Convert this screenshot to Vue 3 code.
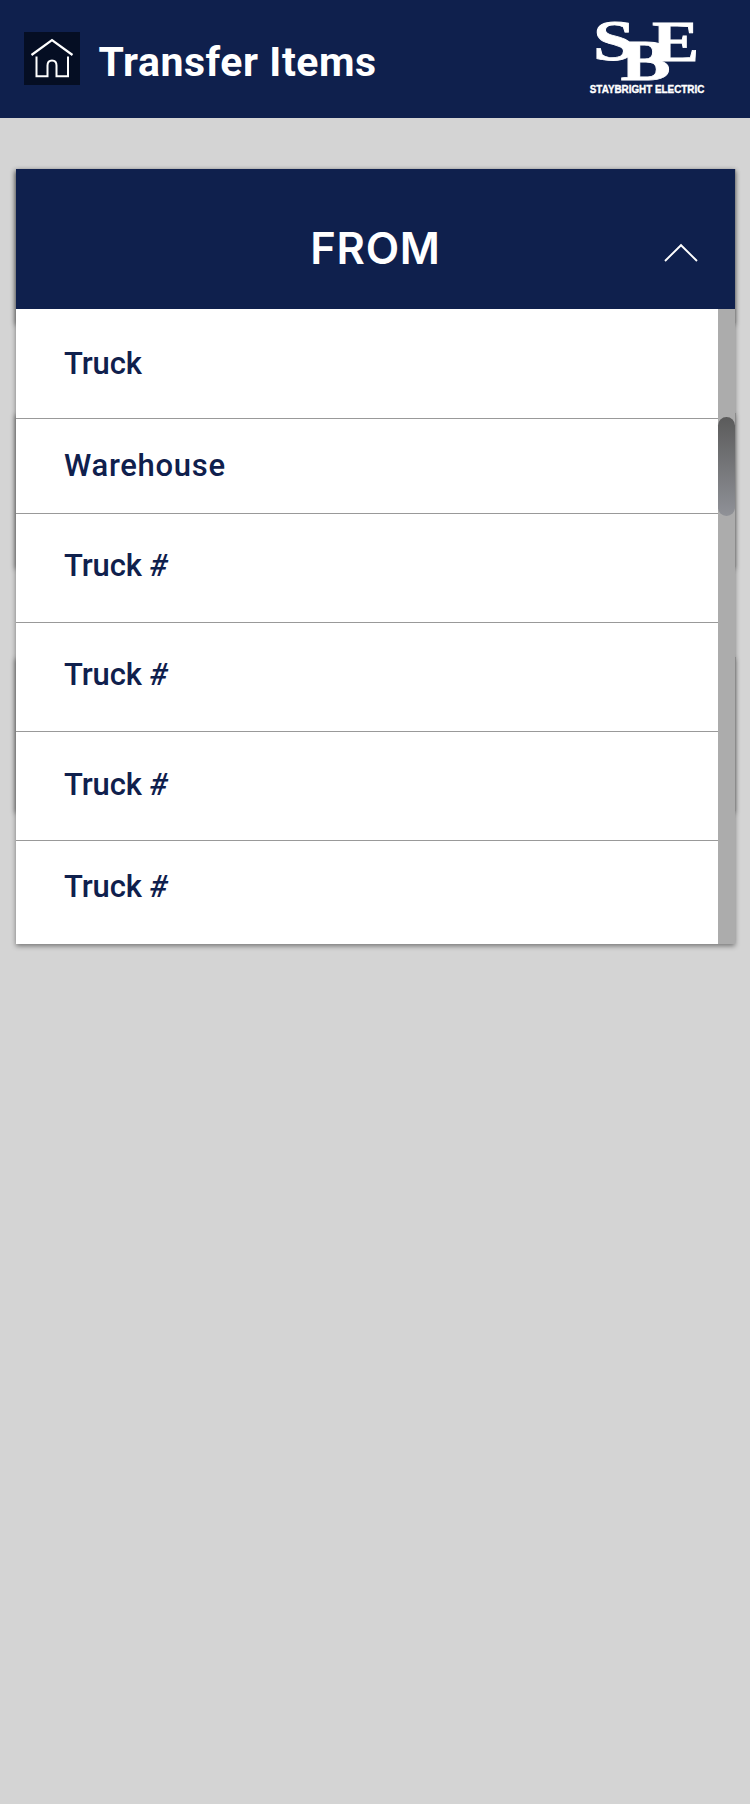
<script setup>
const options = [
  { label: 'Truck', size: 'first' },
  { label: 'Warehouse', size: 'short' },
  { label: 'Truck', mark: '#', size: 'regular' },
  { label: 'Truck', mark: '#', size: 'regular' },
  { label: 'Truck', mark: '#', size: 'regular low' },
  { label: 'Truck', mark: '#', size: 'last' }
]
</script>

<template>
  <div class="screen">
    <header class="topbar">
      <button class="home" aria-label="Home">
        <svg width="56" height="53" viewBox="0 0 56 53" fill="none" stroke="#fff" stroke-width="2.200">
          <path d="M7.500 23 28 8.200 48.500 23" />
          <path d="M12.500 24.500V44.200H23.500V33.500Q23.500 28.500 28 28.500T32.500 33.500V44.200H44V24.500" stroke-width="2" />
        </svg>
      </button>
      <h1 class="title">Transfer Items</h1>
      <svg class="logo" width="124" height="80" viewBox="0 0 124 80" fill="#fff">
        <g class="monogram">
          <text transform="translate(8 44.300) scale(1.320 1)" font-size="57">S</text>
          <text transform="translate(35.400 64.300) scale(1.320 1)" font-size="57">B</text>
          <text transform="translate(67 45.400) scale(1.240 1)" font-size="57">E</text>
        </g>
        <text class="caption" x="4.800" y="76.800" textLength="114.500" lengthAdjust="spacingAndGlyphs">STAYBRIGHT ELECTRIC</text>
      </svg>
    </header>

    <main class="cards">
      <section class="card source">
        <div class="dropdown">
          <div class="dropdown-head">
            <h2>FROM</h2>
            <svg class="chevron" width="36" height="20" viewBox="0 0 36 20" fill="none" stroke="#fff" stroke-width="1.900">
              <path d="M2 18 18 2.200 34 18" />
            </svg>
          </div>
          <div class="dropdown-body">
            <ul class="options">
              <li v-for="(option, i) in options" :key="i" :class="option.size">
                {{ option.label }}<em v-if="option.mark">&nbsp;{{ option.mark }}</em>
              </li>
            </ul>
            <div class="track"><div class="thumb"></div></div>
          </div>
        </div>
      </section>
      <section class="card"></section>
      <section class="card"></section>
    </main>
  </div>
</template>

<style>
body {
  background: #d4d4d4;
}
</style>

<style scoped>
.screen {
  min-height: 1804px;
  background: #d4d4d4;
  font-family: Roboto, "Liberation Sans", sans-serif;
}
.topbar {
  display: flex;
  align-items: flex-start;
  box-sizing: border-box;
  height: 118px;
  padding: 0 41px 0 24px;
  background: #0f204d;
  color: #fff;
}
.home {
  width: 56px;
  height: 53px;
  margin: 32px 0 0;
  padding: 0;
  border: 0;
  background: #050e23;
}
.home svg {
  display: block;
}
.title {
  margin: 37px 0 0 18.500px;
  font-size: 41px;
  line-height: 50px;
  font-weight: 700;
  letter-spacing: 0.55px;
  white-space: nowrap;
}
.logo {
  margin: 16px 0 0 auto;
  overflow: visible;
}
.monogram {
  font-family: "Liberation Serif", serif;
  font-weight: 700;
  stroke: #fff;
  stroke-width: 0.8px;
}
.caption {
  font-family: "Liberation Sans", sans-serif;
  font-size: 11px;
  font-weight: 700;
  stroke: #fff;
  stroke-width: 0.4px;
}
.cards {
  display: flex;
  flex-direction: column;
  gap: 90px;
  padding: 51px 14px 0 16px;
}
.card {
  height: 154px;
  background: #acacac;
  box-shadow: -1px 2px 5px rgba(0, 0, 0, 0.42);
}
.source {
  position: relative;
}
.dropdown {
  position: absolute;
  z-index: 1;
  inset: 0 1px auto 0;
  box-shadow: 0 2px 5px rgba(0, 0, 0, 0.45);
}
.dropdown-head {
  display: grid;
  grid-template-columns: 1fr auto 1fr;
  height: 140px;
  background: #0f204d;
  color: #fff;
}
.dropdown-head h2 {
  grid-column: 2;
  margin: 53px 0 0;
  font-family: Inter, Roboto, sans-serif;
  font-size: 43.500px;
  line-height: 52px;
  font-weight: 600;
  letter-spacing: 0.7px;
}
.chevron {
  justify-self: end;
  margin: 74px 36px 0 0;
}
.dropdown-body {
  display: flex;
  height: 635px;
}
.options {
  flex: 1;
  margin: 0;
  padding: 0;
  list-style: none;
  background: #fff;
}
.options li {
  box-sizing: border-box;
  height: 109px;
  padding: 33px 0 0 48px;
  border-bottom: 1px solid #999;
  color: #0f204d;
  font-size: 31px;
  line-height: 38px;
  font-weight: 500;
  letter-spacing: -0.1px;
}
.options em {
  letter-spacing: 0;
}
.options .first {
  height: 110px;
  padding-top: 36px;
}
.options .short {
  height: 95px;
  padding-top: 28px;
  letter-spacing: 0.7px;
}
.options .low {
  padding-top: 34px;
}
.options .last {
  height: 103px;
  padding-top: 27px;
  border: 0;
}
.track {
  width: 17px;
  background: #acacac;
}
.thumb {
  height: 99px;
  margin-top: 108px;
  border-radius: 8.5px;
  background: linear-gradient(#5b5b5b, #8f9197);
}
</style>
